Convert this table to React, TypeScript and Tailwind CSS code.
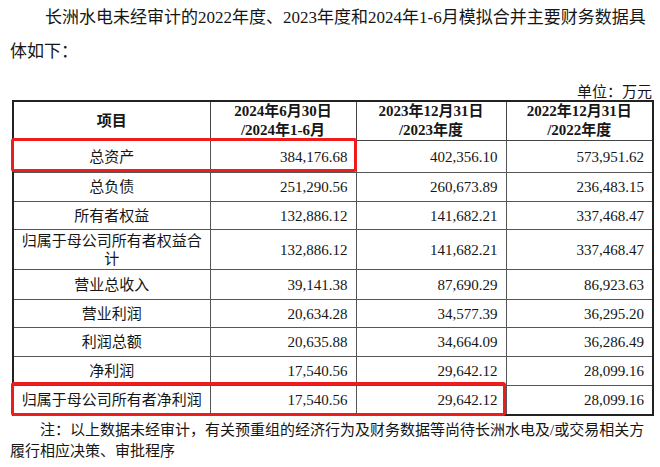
import React from "react";

const rows: { name: React.ReactNode; h: string; v: [string, string, string] }[] = [
  { name: "总资产", h: "h-[32px]", v: ["384,176.68", "402,356.10", "573,951.62"] },
  { name: "总负债", h: "h-[29px]", v: ["251,290.56", "260,673.89", "236,483.15"] },
  { name: "所有者权益", h: "h-[28px]", v: ["132,886.12", "141,682.21", "337,468.47"] },
  {
    name: (
      <>
        <span className="block">归属于母公司所有者权益合</span>
        <span className="block">计</span>
      </>
    ),
    h: "h-[40px]",
    v: ["132,886.12", "141,682.21", "337,468.47"],
  },
  { name: "营业总收入", h: "h-[30px]", v: ["39,141.38", "87,690.29", "86,923.63"] },
  { name: "营业利润", h: "h-[28px]", v: ["20,634.28", "34,577.39", "36,295.20"] },
  { name: "利润总额", h: "h-[29px]", v: ["20,635.88", "34,664.09", "36,286.49"] },
  { name: "净利润", h: "h-[29px]", v: ["17,540.56", "29,642.12", "28,099.16"] },
  { name: "归属于母公司所有者净利润", h: "h-[29px]", v: ["17,540.56", "29,642.12", "28,099.16"] },
];

export default function App() {
  return (
    <div
      className="w-[660px] h-[467px] bg-white text-[#161616] overflow-hidden"
      style={{ fontFamily: "'Liberation Serif', 'Noto Sans CJK SC', serif" }}
    >
      <div className="pl-[10px] pt-[1px] text-[17px] leading-[34px]">
        <div className="pl-[35px] whitespace-nowrap">
          长洲水电未经审计的2022年度、2023年度和2024年1-6月模拟合并主要财务数据具
        </div>
        <div className="whitespace-nowrap">体如下：</div>
      </div>
      <div className="mt-[15px] h-[16px] pr-[8px] text-right text-[15px] leading-[16px]">单位：万元</div>
      <div className="relative ml-[12px] w-[640px]">
        <table className="w-[640px] table-fixed border-collapse border-2 border-[#222] text-[15px]">
          <colgroup>
            <col className="w-[197px]" />
            <col className="w-[146px]" />
            <col className="w-[150px]" />
            <col className="w-[147px]" />
          </colgroup>
          <thead>
            <tr className="h-[39px] font-bold leading-[19px]">
              <th className="border border-[#444] text-center align-middle">项目</th>
              <th className="border border-[#444] text-center align-middle">
                <span className="block">2024年6月30日</span>
                <span className="block">/2024年1-6月</span>
              </th>
              <th className="border border-[#444] text-center align-middle">
                <span className="block">2023年12月31日</span>
                <span className="block">/2023年度</span>
              </th>
              <th className="border border-[#444] text-center align-middle">
                <span className="block">2022年12月31日</span>
                <span className="block">/2022年度</span>
              </th>
            </tr>
          </thead>
          <tbody>
            {rows.map((r, i) => (
              <tr key={i} className={`${r.h} leading-[18px]`}>
                <td className="border border-[#555] text-center align-middle">{r.name}</td>
                {r.v.map((v, j) => (
                  <td key={j} className="border border-[#555] text-right align-middle pr-[8px]">
                    {v}
                  </td>
                ))}
              </tr>
            ))}
          </tbody>
        </table>
        <div className="absolute left-[-1px] top-[38px] w-[346px] h-[34px] border-[3px] border-[#ee1c1c] rounded-[3px]" />
        <div className="absolute left-[-1px] top-[282px] w-[495px] h-[34px] border-[3px] border-[#ee1c1c] rounded-[3px]" />
      </div>
      <div className="mt-[4px] pl-[10px] text-[15px] leading-[21px]">
        <div className="pl-[30px] whitespace-nowrap">
          注：以上数据未经审计，有关预重组的经济行为及财务数据等尚待长洲水电及/或交易相关方
        </div>
        <div className="whitespace-nowrap">履行相应决策、审批程序</div>
      </div>
    </div>
  );
}
